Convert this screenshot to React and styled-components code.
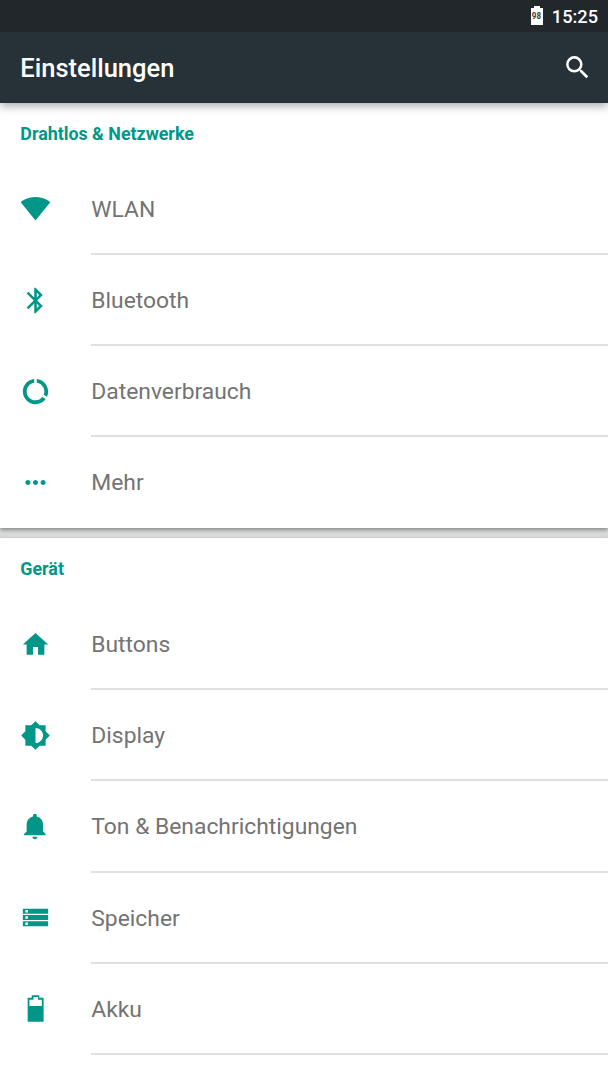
import React from 'react';
import styled, { createGlobalStyle } from 'styled-components';

const GlobalStyle = createGlobalStyle`
  * {
    box-sizing: border-box;
  }
  body {
    margin: 0;
    background-color: #dadcdc;
    font-family: Roboto, sans-serif;
    overflow: hidden;
  }
`

const Screen = styled.div`
  display: flex;
  flex-direction: column;
  width: 608px;
  height: 1080px;
  overflow: hidden;
`

const StatusBar = styled.div`
  display: flex;
  flex: none;
  align-items: center;
  justify-content: flex-end;
  gap: 9px;
  height: 32px;
  padding: 1px 10px 0 0;
  background-color: #21272b;
  color: white;
  z-index: 2;
`

const Battery = styled.div`
  display: flex;
  flex-direction: column;
  align-items: center;
  margin-top: -2px;
`

const BatteryCap = styled.div`
  width: 6px;
  height: 2px;
  background-color: white;
`

const BatteryBody = styled.div`
  display: flex;
  justify-content: center;
  width: 12px;
  height: 17px;
  background-color: white;
`

const BatteryLevel = styled.span`
  color: #3a3f42;
  font-size: 9.5px;
  font-weight: 700;
  line-height: 16px;
  transform: scaleX(0.84);
`

const Clock = styled.div`
  font-size: 18.2px;
  font-weight: 500;
  line-height: 22px;
`

const Toolbar = styled.div`
  display: flex;
  flex: none;
  align-items: center;
  justify-content: space-between;
  height: 71px;
  padding: 0 15px 0 20.3px;
  background-color: #263238;
  color: white;
  box-shadow: 0 3px 9px rgba(0, 0, 0, 0.34);
  z-index: 1;
`

const Title = styled.h1`
  margin: 0;
  font-size: 25.5px;
  font-weight: 500;
  line-height: 30px;
`

const Icon = styled.svg`
  display: block;
  flex: none;
  width: 31px;
  height: 31px;
  fill: currentColor;
`

const Section = styled.section`
  flex: none;
  margin-bottom: 10px;
  background-color: white;
  box-shadow: 0 2px 4px rgba(0, 0, 0, 0.38);
`

const SectionTitle = styled.h2`
  height: 60.6px;
  margin: 0;
  padding: 20px 20.3px 0;
  color: #009688;
  font-size: 17.85px;
  font-weight: 700;
  line-height: 22px;
`

const Row = styled.div`
  display: flex;
  height: 91.2px;
  padding-left: 20px;
  color: #009688;

  ${Icon} {
    margin: 29.8px 40.3px 0 0;
  }
`

const Label = styled.div`
  flex: 1;
  border-bottom: ${(props) => (props.$last ? '0' : '2px solid #e0e0e0')};
  color: #737373;
  font-size: 22.85px;
  line-height: 92px;
`

const icons = {
  search: 'M15.5 14h-.79l-.28-.27A6.47 6.47 0 0 0 16 9.5 6.5 6.5 0 1 0 9.5 16c1.61 0 3.09-.59 4.23-1.57l.27.28v.79l5 4.99L20.49 19l-4.99-5zm-6 0C7.01 14 5 11.99 5 9.5S7.01 5 9.5 5 14 7.01 14 9.5 11.99 14 9.5 14z',
  wifi: 'M12.01 21.49L23.64 7c-.45-.34-4.93-4-11.64-4C5.28 3 .81 6.66.36 7l11.63 14.49.01.01.01-.01z',
  bluetooth: 'M17.71 7.71L12 2h-1v7.59L6.41 5 5 6.41 10.59 12 5 17.59 6.41 19 11 14.41V22h1l5.71-5.71-4.3-4.29 4.3-4.29zM13 5.83l1.88 1.88L13 9.59V5.83zm1.88 10.46L13 18.17v-3.76l1.88 1.88z',
  data: 'M13 2.05v3.03c3.39.49 6 3.39 6 6.92 0 .9-.18 1.75-.48 2.54l2.6 1.53c.56-1.24.88-2.62.88-4.07 0-5.18-3.95-9.45-9-9.95zM12 19c-3.87 0-7-3.13-7-7 0-3.53 2.61-6.43 6-6.92V2.05c-5.06.5-9 4.76-9 9.95 0 5.52 4.47 10 9.99 10 3.31 0 6.24-1.61 8.06-4.09l-2.6-1.53C16.17 17.98 14.21 19 12 19z',
  more: 'M6 10c-1.1 0-2 .9-2 2s.9 2 2 2 2-.9 2-2-.9-2-2-2zm12 0c-1.1 0-2 .9-2 2s.9 2 2 2 2-.9 2-2-.9-2-2-2zm-6 0c-1.1 0-2 .9-2 2s.9 2 2 2 2-.9 2-2-.9-2-2-2z',
  home: 'M10 20v-6h4v6h5v-8h3L12 3 2 12h3v8z',
  display: 'M20 15.31L23.31 12 20 8.69V4h-4.69L12 .69 8.69 4H4v4.69L.69 12 4 15.31V20h4.69L12 23.31 15.31 20H20v-4.69zM12 18V6c3.31 0 6 2.69 6 6s-2.69 6-6 6z',
  bell: 'M11.5 22c1.1 0 2-.9 2-2h-4c0 1.1.9 2 2 2zm6.5-6v-5.5c0-3.07-2.13-5.64-5-6.32V3.5c0-.83-.67-1.5-1.5-1.5S10 2.67 10 3.5v.68c-2.87.68-5 3.25-5 6.32V16l-2 2v1h17v-1l-2-2z',
  storage: 'M2 5h20v4H2zM2 10h20v4H2zM2 15h20v4H2zM4 6v2h2V6zM4 11v2h2v-2zM4 16v2h2v-2z',
  battery: 'M9 1.5h6v2h3.4v19H5.8v-19H9zM10.4 3v2H7.2v5H17V5h-3V3z',
}

const sections = [
  {
    title: 'Drahtlos & Netzwerke',
    items: [
      { icon: 'wifi', label: 'WLAN' },
      { icon: 'bluetooth', label: 'Bluetooth' },
      { icon: 'data', label: 'Datenverbrauch' },
      { icon: 'more', label: 'Mehr' },
    ],
  },
  {
    title: 'Gerät',
    items: [
      { icon: 'home', label: 'Buttons' },
      { icon: 'display', label: 'Display' },
      { icon: 'bell', label: 'Ton & Benachrichtigungen' },
      { icon: 'storage', label: 'Speicher' },
      { icon: 'battery', label: 'Akku' },
      // cut off by the bottom of the screen
      { icon: null, label: '' },
    ],
  },
]

const Glyph = ({ name }) => (
  <Icon viewBox="-0.24 -0.24 24.48 24.48">
    {name && <path fillRule="evenodd" d={icons[name]} />}
  </Icon>
)

function App () {
  return (
    <Screen>
      <GlobalStyle />
      <StatusBar>
        <Battery>
          <BatteryCap />
          <BatteryBody>
            <BatteryLevel>98</BatteryLevel>
          </BatteryBody>
        </Battery>
        <Clock>15:25</Clock>
      </StatusBar>

      <Toolbar>
        <Title>Einstellungen</Title>
        <Glyph name="search" />
      </Toolbar>

      {sections.map((section) => (
        <Section key={section.title}>
          <SectionTitle>{section.title}</SectionTitle>
          {section.items.map((item, idx) => (
            <Row key={idx}>
              <Glyph name={item.icon} />
              <Label $last={idx === section.items.length - 1}>{item.label}</Label>
            </Row>
          ))}
        </Section>
      ))}
    </Screen>
  );
}

export default App;
